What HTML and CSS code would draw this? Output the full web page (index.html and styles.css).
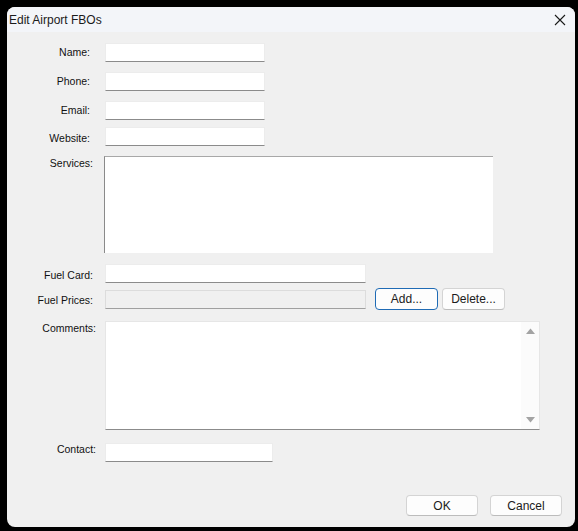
FILE: index.html
```html
<!DOCTYPE html>
<html>
<head>
<meta charset="utf-8" />
<title>Edit Airport FBOs</title>
<link rel="stylesheet" href="styles.css">
</head>
<body>
<div class="win">
	<div class="titlebar">
		<span class="title">Edit Airport FBOs</span>
		<svg class="close" width="12" height="12" viewBox="0 0 12 12"><path d="M1 1L11 11M11 1L1 11" stroke="#1a1a1a" stroke-width="1.1" fill="none"/></svg>
	</div>
	<div class="content">
		<div class="row r-name">
			<label class="lbl">Name:</label>
			<div class="field w160"></div>
		</div>
		<div class="row r-phone">
			<label class="lbl">Phone:</label>
			<div class="field w160"></div>
		</div>
		<div class="row r-email">
			<label class="lbl">Email:</label>
			<div class="field w160"></div>
		</div>
		<div class="row r-web">
			<label class="lbl down">Website:</label>
			<div class="field w160"></div>
		</div>
		<div class="row top r-serv">
			<label class="lbl l2">Services:</label>
			<div class="memo"></div>
		</div>
		<div class="row r-card">
			<label class="lbl l2 down">Fuel Card:</label>
			<div class="field w261"></div>
		</div>
		<div class="row r-price">
			<label class="lbl l2 down">Fuel Prices:</label>
			<div class="field w261 off"></div>
			<button class="btn btn-def add">Add...</button>
			<button class="btn del">Delete...</button>
		</div>
		<div class="row top r-comm">
			<label class="lbl l3">Comments:</label>
			<div class="comments">
				<div class="comments-text"></div>
				<div class="vscroll">
					<svg width="9" height="6" viewBox="0 0 9 6"><path d="M0 6L4.5 0.5L9 6Z" fill="#a3a3a3"/></svg>
					<svg width="9" height="6" viewBox="0 0 9 6"><path d="M0 0L4.5 5.5L9 0Z" fill="#a3a3a3"/></svg>
				</div>
			</div>
		</div>
		<div class="row r-contact">
			<label class="lbl l3 up">Contact:</label>
			<div class="field w168"></div>
		</div>
		<div class="footer">
			<button class="btn ok">OK</button>
			<button class="btn cancel">Cancel</button>
		</div>
	</div>
</div>
</body>
</html>
```

FILE: styles.css
```css
*{ margin:0; padding:0; box-sizing:border-box;}
html,body{ background:#000; height:100%;}
body{ padding:7px 3px 4px 7px;}
.win{ width:568px; height:520px; background:#f0f0f0; border-radius:8px; overflow:hidden; display:flex; flex-direction:column;}
.titlebar{ height:25px; background:#f3f5f9; display:flex; align-items:center; justify-content:space-between; padding:0 9px 0 2px;}
.title{ font:12px "Liberation Sans", Arial, sans-serif; color:#1b1b1b; padding-top:1px;}
.close{ margin-top:1px;}
.content{ flex:1; display:flex; flex-direction:column; padding-top:11px; font:10.5px "Liberation Sans", Arial, sans-serif; color:#111;}

.row{ display:flex; align-items:center;}
.row.top{ align-items:flex-start;}
.lbl{ width:89px; margin-right:9px; text-align:right; padding-right:6px; line-height:13px;}
.lbl.l2{ padding-right:3px;}
.lbl.l3{ padding-right:0;}
.lbl.down{ margin-top:3px;}
.lbl.up{ margin-bottom:6px;}
.row.top .lbl{ padding-top:1px;}

.r-phone,.r-email{ margin-top:10px;}
.r-web{ margin-top:7px;}
.r-serv{ margin-top:10px;}
.r-card{ margin-top:11px;}
.r-price{ margin-top:5px;}
.r-comm{ margin-top:11px;}
.r-contact{ margin-top:13px;}

.field{ height:19px; background:#fff; border:1px solid #ececec; border-bottom-color:#8b8b8b;}
.field.off{ background:#f0f0f0; border-color:#dcdcdc; border-bottom-color:#a0a0a0;}
.w160{ width:160px;}
.w261{ width:261px;}
.w168{ width:168px;}

.memo{ width:389px; height:97px; margin-left:-1px; background:#fff; border-top:1px solid #a8a8a8; border-left:1px solid #8a8a8a;}

.comments{ width:435px; height:109px; display:flex; background:#fff; border:1px solid #e6e6e6; border-bottom-color:#8b8b8b;}
.comments-text{ flex:1;}
.vscroll{ width:18px; display:flex; flex-direction:column; justify-content:space-between; align-items:center; padding:6px 0 6px; background:#fbfbfb;}
.vscroll svg{ display:block;}

.btn{ height:21px; font:12px "Liberation Sans", Arial, sans-serif; color:#1b1b1b; background:#fdfdfd; border:1px solid #d4d4d4; border-bottom-color:#bcbcbc; border-radius:4px;}
.btn-def{ border:1px solid #1f6bb5;}
.add{ width:63px; height:22px; margin-left:9px;}
.del{ width:63px; height:22px; margin-left:4px;}

.footer{ margin-top:auto; margin-bottom:11px; display:flex; justify-content:flex-end; gap:12px; padding-right:13px;}
.ok,.cancel{ width:72px;}
```
